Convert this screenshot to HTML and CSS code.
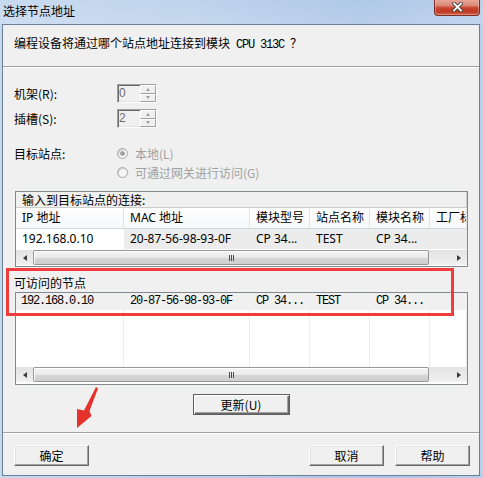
FILE: index.html
```html
<!DOCTYPE html>
<html lang="zh-CN">
<head>
<meta charset="utf-8">
<title>选择节点地址</title>
<link rel="stylesheet" href="styles.css">
</head>
<body>
<div class="window">
  <div class="titlebar">
    <span class="title">选择节点地址</span>
    <button class="close" aria-label="关闭">
      <svg width="11" height="10" viewBox="0 0 11 10"><path d="M2 1.5 L9 8.5 M9 1.5 L2 8.5" stroke="#3a3a3a" stroke-width="3.6" stroke-linecap="square"/><path d="M2 1.5 L9 8.5 M9 1.5 L2 8.5" stroke="#ffffff" stroke-width="1.8" stroke-linecap="square"/></svg>
    </button>
  </div>
  <div class="client">
    <p class="prompt">编程设备将通过哪个站点地址连接到模块<span class="mono"> CPU 313C </span>？</p>
    <div class="sep"></div>
    <div class="form">
      <span class="lbl">机架(R):</span>
      <div class="spin"><span class="val">0</span><span class="arrows"><span class="up"></span><span class="down"></span></span></div>
      <span class="lbl">插槽(S):</span>
      <div class="spin"><span class="val">2</span><span class="arrows"><span class="up"></span><span class="down"></span></span></div>
    </div>
    <div class="target">
      <span class="lbl">目标站点:</span>
      <div class="radios">
        <div class="radio checked"><span class="dot"></span>本地(L)</div>
        <div class="radio"><span class="dot"></span>可通过网关进行访问(G)</div>
      </div>
    </div>
    <div class="list list1">
      <div class="caption">输入到目标站点的连接:</div>
      <div class="grid head">
        <span>IP 地址</span><span>MAC 地址</span><span>模块型号</span><span>站点名称</span><span>模块名称</span><span>工厂标识</span>
      </div>
      <div class="grid data1">
        <span>192.168.0.10</span><span>20-87-56-98-93-0F</span><span>CP 34...</span><span>TEST</span><span>CP 34...</span><span></span>
      </div>
      <div class="gap1"></div>
      <div class="hscroll"><span class="sarrow left"></span><div class="track"><div class="thumb"><span class="grip"></span></div></div><span class="sarrow right"></span></div>
    </div>
    <div class="section">可访问的节点</div>
    <div class="list list2">
      <div class="grid nodes">
        <span class="cell">192.168.0.10</span><span class="cell">20-87-56-98-93-0F</span><span class="cell">CP 34...</span><span class="cell">TEST</span><span class="cell">CP 34...</span><span class="cell"></span>
        <span class="fill"></span><span class="fill"></span><span class="fill"></span><span class="fill"></span><span class="fill"></span><span class="fill"></span>
      </div>
      <div class="hscroll"><span class="sarrow left"></span><div class="track"><div class="thumb"><span class="grip"></span></div></div><span class="sarrow right"></span></div>
    </div>
    <div class="refresh-row"><button class="btn default">更新(U)</button></div>
    <div class="sep sep2"></div>
    <div class="footer">
      <button class="btn">确定</button>
      <span class="spacer"></span>
      <button class="btn">取消</button>
      <button class="btn help">帮助</button>
    </div>
  </div>
  <div class="highlight"></div>
  <svg class="arrow" width="28" height="46" viewBox="0 0 28 46"><polygon points="22,3 24,4.5 15.5,27 17.5,32 3,44 3,25 10,26.5" fill="#e5322d"/></svg>
</div>
</body>
</html>
```
FILE: styles.css
```css
* { box-sizing: border-box; }
html, body { margin: 0; padding: 0; }
body {
  width: 483px;
  height: 478px;
  overflow: hidden;
  font-family: "Noto Sans CJK SC", "Noto Sans", sans-serif;
  font-size: 12px;
  color: #000;
  background: #bdd2eb;
}
.window {
  position: relative;
  width: 483px;
  height: 478px;
  display: flex;
  flex-direction: column;
  background: linear-gradient(to right, #c4d8ee, #b6cde9 50%, #aac6e7 80%, #b8cfea);
}
.titlebar {
  height: 24px;
  flex: none;
  display: flex;
  align-items: flex-start;
  justify-content: space-between;
  background:
    linear-gradient(to bottom, rgba(255,255,255,0.08), rgba(255,255,255,0.18)),
    linear-gradient(to right, #c3d7ee 0%, #b9d0ea 40%, #a8c4e6 75%, #b4cce9 100%);
}
.title {
  padding-left: 3px;
  line-height: 22px;
  font-size: 12px;
}
.close {
  width: 46px;
  height: 17px;
  margin: -1px 3px 0 0;
  padding: 0;
  border: 1px solid #7a2e26;
  border-top: none;
  border-radius: 0 0 4px 4px;
  background: linear-gradient(to bottom, #e9a99c 0%, #dc8a79 40%, #c8452f 55%, #c13a25 80%, #d0674f 100%);
  box-shadow: inset 0 0 0 1px rgba(255,220,210,0.35);
  display: flex;
  align-items: center;
  justify-content: center;
}
.client {
  flex: none;
  height: 452px;
  margin: 0 3px 2px 2px;
  border: 1px solid #6c7f98;
  background: #f0f0f0;
  display: flex;
  flex-direction: column;
}
.prompt {
  margin: 0;
  height: 41px;
  flex: none;
  padding: 10px 0 0 11px;
  line-height: 16px;
  white-space: nowrap;
}
.mono {
  font-family: "Liberation Mono", monospace;
  font-size: 12px;
  letter-spacing: -1.2px;
}
.sep {
  flex: none;
  height: 2px;
  border-top: 1px solid #a0a0a0;
  border-bottom: 1px solid #ffffff;
}
.form {
  flex: none;
  display: grid;
  grid-template-columns: 103px auto;
  grid-auto-rows: 19px;
  row-gap: 6px;
  margin-top: 16px;
  padding-left: 11px;
  align-items: center;
  justify-content: start;
}
.lbl { line-height: 19px; white-space: nowrap; }
.spin {
  width: 40px;
  height: 19px;
  display: flex;
  border: 1px solid;
  border-color: #a0a0a0 #ffffff #ffffff #a0a0a0;
  box-shadow: inset 1px 1px #696969, inset -1px -1px #e3e3e3;
  background: #f0f0f0;
}
.val {
  flex: 1;
  padding-left: 1px;
  font-family: "Liberation Sans", sans-serif;
  font-size: 12px;
  line-height: 17px;
  color: #6d6d6d;
}
.arrows {
  width: 16px;
  display: flex;
  flex-direction: column;
}
.arrows span {
  flex: 1;
  display: flex;
  align-items: center;
  justify-content: center;
  background: #f0f0f0;
  border: 1px solid;
  border-color: #ffffff #a0a0a0 #a0a0a0 #ffffff;
}
.arrows span::before {
  content: "";
  border-left: 2.5px solid transparent;
  border-right: 2.5px solid transparent;
}
.arrows .up::before { border-bottom: 3px solid #a0a0a0; }
.arrows .down::before { border-top: 3px solid #a0a0a0; }
.target {
  flex: none;
  display: grid;
  grid-template-columns: 103px auto;
  justify-content: start;
  margin-top: 16px;
  padding-left: 11px;
}
.radio {
  height: 19px;
  display: flex;
  align-items: center;
  color: #a0a0a0;
  white-space: nowrap;
}
.dot {
  width: 11px;
  height: 11px;
  margin-right: 7px;
  border-radius: 50%;
  border: 1px solid #a8a8a8;
  background: #f4f4f4;
  box-shadow: inset 1px 1px #d0d0d0;
}
.radio.checked .dot {
  background: radial-gradient(circle, #a0a0a0 0 2px, #f4f4f4 2.5px);
}
.list {
  flex: none;
  margin: 0 11px 0 12px;
  border: 1px solid #828790;
  background: #ffffff;
  overflow: hidden;
}
.list1 { margin-top: 9px; height: 76px; }
.caption {
  height: 16px;
  line-height: 15px;
  padding-left: 6px;
  background: #f0f0f0;
  border-right: 1px solid #cdcdcd;
  border-bottom: 1px solid #cdcdcd;
  white-space: nowrap;
}
.grid {
  display: grid;
  grid-template-columns: 108px 126px 60px 60px 60px 1fr;
}
.head {
  height: 21px;
  border-bottom: 1px solid #d5d5d5;
  background: linear-gradient(#ffffff, #f7f8fa);
  font-family: "Noto Sans", "Noto Sans CJK SC", sans-serif;
}
.head span {
  border-right: 1px solid #e2e3e5;
  padding-left: 6px;
  line-height: 20px;
  white-space: nowrap;
  overflow: hidden;
}
.data1 { height: 20px; font-family: "Noto Sans", "Noto Sans CJK SC", sans-serif; }
.data1 span {
  padding-left: 6px;
  line-height: 20px;
  white-space: nowrap;
  overflow: hidden;
  background: #ececec;
}
.data1 span:first-child { background: #ffffff; }
.gap1 { height: 1px; }
.hscroll {
  display: flex;
  height: 15px;
  background: linear-gradient(#e3e3e3, #f0f0f0);
}
.sarrow {
  width: 17px;
  flex: none;
  display: flex;
  align-items: center;
  justify-content: center;
}
.sarrow::before {
  content: "";
  border-top: 3.5px solid transparent;
  border-bottom: 3.5px solid transparent;
}
.sarrow.left::before { border-right: 4px solid #3a3a3a; }
.sarrow.right::before { border-left: 4px solid #3a3a3a; }
.track { flex: 1; display: flex; }
.thumb {
  width: 95%;
  height: 100%;
  border: 1px solid #979797;
  border-radius: 2px;
  background: linear-gradient(#f5f5f5, #e9e9e9 50%, #d6d6d6 51%, #cfcfcf);
  box-shadow: inset 1px 1px #ffffff;
  display: flex;
  align-items: center;
  justify-content: center;
}
.grip {
  width: 5px;
  height: 6px;
  background: repeating-linear-gradient(90deg, #4a4a4a 0 1px, transparent 1px 2px);
}
.section {
  flex: none;
  height: 25px;
  padding: 8px 0 0 11px;
  line-height: 16px;
}
.list2 { height: 93px; }
.nodes .cell {
  background: #f0f0f0;
  border-right: 1px solid #f0f0f0;
  padding-left: 6px;
  font-family: "Liberation Mono", monospace;
  font-size: 12px;
  letter-spacing: -1.2px;
  line-height: 17px;
  white-space: nowrap;
  overflow: hidden;
}
.nodes .cell:first-child { padding-left: 5px; }
.nodes .fill {
  border-right: 1px solid #ececec;
}
.list2 .grid { grid-template-rows: 17px 57px; height: 74px; }
.list2 .hscroll { margin-bottom: 2px; }
.refresh-row {
  flex: none;
  margin-top: 9px;
  display: flex;
  justify-content: center;
}
.btn {
  height: 21px;
  width: 75px;
  padding: 0;
  font-family: "Noto Sans CJK SC", sans-serif;
  font-size: 12px;
  line-height: 19px;
  color: #000;
  background: #f0f0f0;
  border: 1px solid;
  border-color: #ffffff #696969 #696969 #ffffff;
  box-shadow: inset -1px -1px #a0a0a0, inset 1px 1px #e3e3e3;
}
.btn.default {
  width: 97px;
  border: 1px solid #5f5f5f;
  box-shadow: inset 1px 1px #ffffff, inset -1px -1px #696969, inset -2px -2px #a0a0a0;
}
.sep2 { margin-top: 17px; }
.footer {
  flex: none;
  margin-top: 11px;
  display: flex;
  padding: 0 9px 0 11px;
}
.spacer { flex: 1; }
.help { margin-left: 11px; }
.highlight {
  position: absolute;
  left: 6px;
  top: 268px;
  width: 448px;
  height: 48px;
  border: 3px solid #f03c3c;
}
.arrow {
  position: absolute;
  left: 74px;
  top: 384px;
}
```
